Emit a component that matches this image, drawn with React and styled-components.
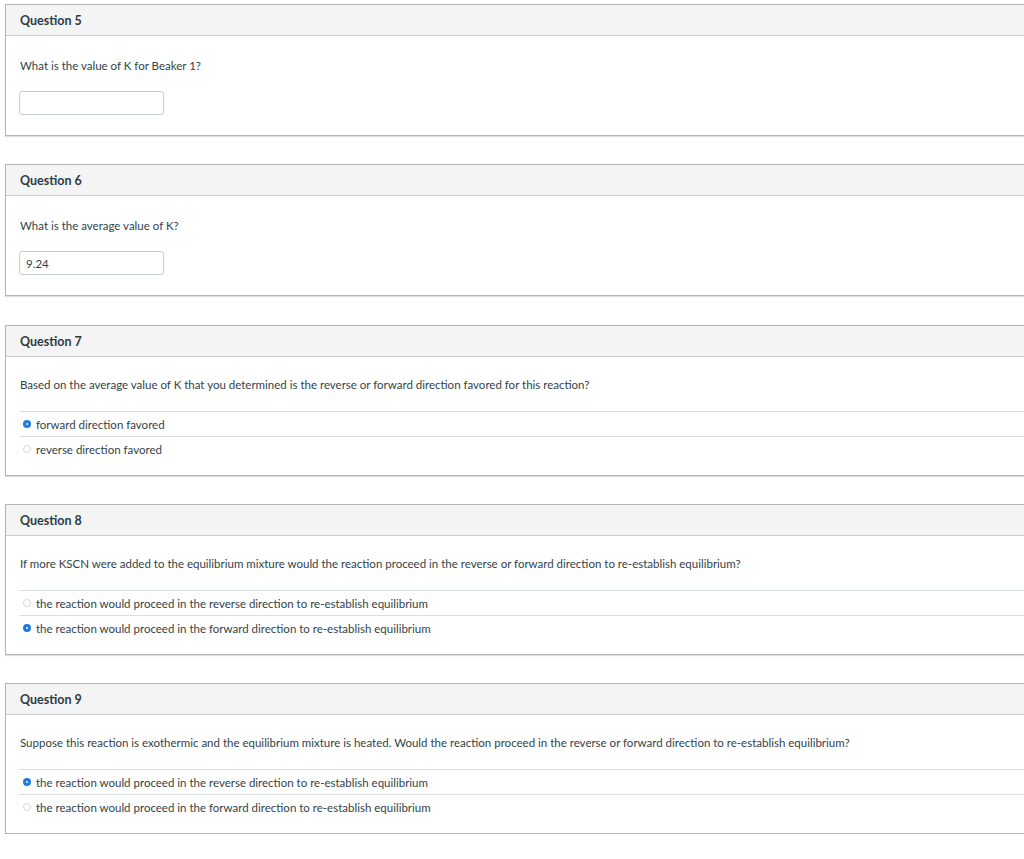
import React from 'react';
import styled, { createGlobalStyle } from 'styled-components';

const GlobalStyle = createGlobalStyle`
  body {
    margin: 0;
    background: #ffffff;
    font-family: Lato, 'Open Sans', sans-serif;
    color: #2d3b45;
    overflow: hidden;
  }
`;

const Page = styled.div`
  display: flex;
  flex-direction: column;
  gap: 28px;
  padding: 4px 0 0 5px;
  width: 1040px;
`;

const Card = styled.section`
  border: 1px solid #b5b5b5;
  border-right: none;
  box-shadow: 0 1px 1px rgba(0, 0, 0, 0.12);
  background: #ffffff;
  margin-bottom: ${(p) => (p.extra ? '1px' : '0')};
`;

const Header = styled.div`
  display: flex;
  align-items: center;
  height: 30px;
  padding: 0 14px;
  background: #f4f4f4;
  border-bottom: 1px solid #c7cdd1;
  font-weight: 700;
  font-size: 12.5px;
  color: #2d3b45;
`;

const Body = styled.div`
  display: flex;
  flex-direction: column;
  align-items: flex-start;
  padding: ${(p) => (p.choices ? '20px 0 14px 13px' : '22px 13px 20px 13px')};
`;

const Prompt = styled.p`
  margin: 0 0 ${(p) => (p.choices ? '18px' : '17px')} 1px;
  font-size: 11.5px;
  line-height: 16px;
  color: #333f48;
`;

const Answer = styled.div`
  box-sizing: border-box;
  width: 145px;
  height: 24px;
  padding: 0 6px;
  display: flex;
  align-items: center;
  border: 1px solid #c7cdd1;
  border-radius: 3px;
  font-size: 11.5px;
  color: #333f48;
`;

const Choices = styled.div`
  align-self: stretch;
  display: flex;
  flex-direction: column;
`;

const Choice = styled.div`
  display: flex;
  align-items: center;
  gap: 5px;
  height: 24px;
  padding-left: 4px;
  border-top: 1px solid #dadfe2;
  font-size: 11.5px;
  color: #333f48;
`;

const Radio = styled.span`
  box-sizing: border-box;
  width: 8px;
  height: 8px;
  border-radius: 50%;
  flex: none;
  background: #ffffff;
  border: ${(p) => (p.checked ? '3px solid #1f7be0' : '1px solid #d4d8db')};
`;

const questions = [
  { n: 5, text: 'What is the value of K for Beaker 1?', answer: '' },
  { n: 6, text: 'What is the average value of K?', answer: '9.24' },
  {
    n: 7,
    text: 'Based on the average value of K that you determined is the reverse or forward direction favored for this reaction?',
    choices: ['forward direction favored', 'reverse direction favored'],
    selected: 0,
  },
  {
    n: 8,
    text: 'If more KSCN were added to the equilibrium mixture would the reaction proceed in the reverse or forward direction to re-establish equilibrium?',
    choices: [
      'the reaction would proceed in the reverse direction to re-establish equilibrium',
      'the reaction would proceed in the forward direction to re-establish equilibrium',
    ],
    selected: 1,
  },
  {
    n: 9,
    text: 'Suppose this reaction is exothermic and the equilibrium mixture is heated. Would the reaction proceed in the reverse or forward direction to re-establish equilibrium?',
    choices: [
      'the reaction would proceed in the reverse direction to re-establish equilibrium',
      'the reaction would proceed in the forward direction to re-establish equilibrium',
    ],
    selected: 0,
  },
];

export default function App() {
  return (
    <>
      <GlobalStyle />
      <Page>
        {questions.map((q) => (
          <Card key={q.n} extra={q.n === 6}>
            <Header>Question {q.n}</Header>
            <Body choices={!!q.choices}>
              <Prompt choices={!!q.choices}>{q.text}</Prompt>
              {q.choices ? (
                <Choices>
                  {q.choices.map((c, i) => (
                    <Choice key={c}>
                      <Radio checked={i === q.selected} />
                      {c}
                    </Choice>
                  ))}
                </Choices>
              ) : (
                <Answer>{q.answer}</Answer>
              )}
            </Body>
          </Card>
        ))}
      </Page>
    </>
  );
}
